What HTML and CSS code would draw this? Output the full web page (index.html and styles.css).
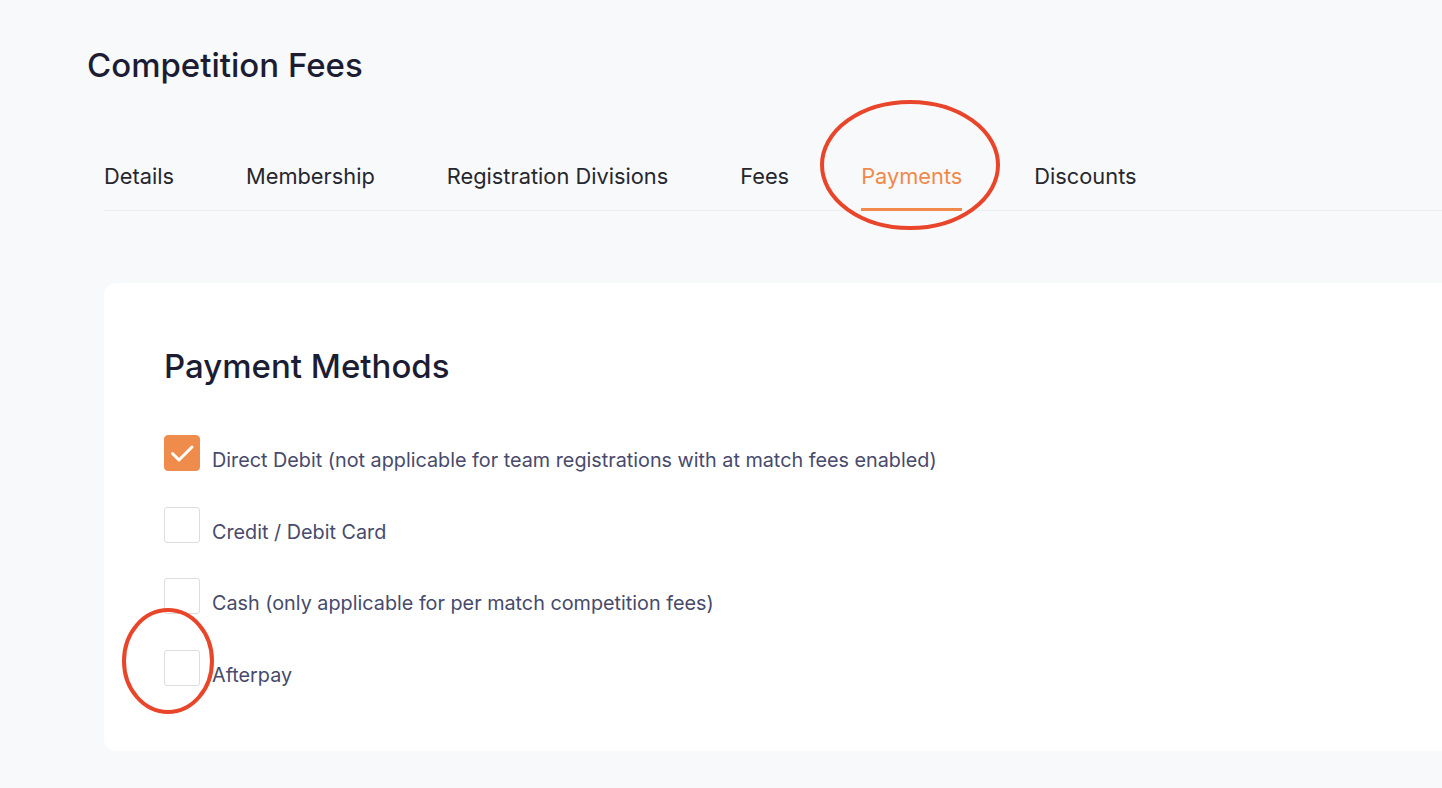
FILE: index.html
```html
<!DOCTYPE html>
<html lang="en">
<head>
<meta charset="utf-8">
<title>Competition Fees</title>
<link rel="stylesheet" href="styles.css">
</head>
<body>
<div class="page">
  <h1 class="title">Competition Fees</h1>
  <nav class="tabs">
    <span class="tab">Details</span>
    <span class="tab">Membership</span>
    <span class="tab">Registration Divisions</span>
    <span class="tab">Fees</span>
    <span class="tab active">Payments</span>
    <span class="tab">Discounts</span>
  </nav>
  <section class="card">
    <h2 class="card-title">Payment Methods</h2>
    <ul class="options">
      <li class="option">
        <span class="box checked">
          <svg viewBox="0 0 36 36" width="36" height="36"><path d="M8.5 18.5l6.5 6.5 13-13" fill="none" stroke="#fff" stroke-width="3" stroke-linecap="round" stroke-linejoin="round"/></svg>
        </span>
        <span class="label">Direct Debit (not applicable for team registrations with at match fees enabled)</span>
      </li>
      <li class="option">
        <span class="box"></span>
        <span class="label">Credit / Debit Card</span>
      </li>
      <li class="option">
        <span class="box"></span>
        <span class="label">Cash (only applicable for per match competition fees)</span>
      </li>
      <li class="option">
        <span class="box"></span>
        <span class="label">Afterpay</span>
      </li>
    </ul>
  </section>
  <svg class="annotations" width="1442" height="788" viewBox="0 0 1442 788">
    <ellipse cx="910" cy="165" rx="88" ry="63" fill="none" stroke="#e8452a" stroke-width="4"/>
    <ellipse cx="168" cy="661" rx="44" ry="51" fill="none" stroke="#e8452a" stroke-width="4"/>
  </svg>
</div>
</body>
</html>
```
FILE: styles.css
```css
html, body {
  margin: 0;
  padding: 0;
  background: #f8f9fb;
  font-family: Inter, "Noto Sans", sans-serif;
  overflow: hidden;
}
.page {
  position: relative;
  width: 1442px;
  height: 788px;
  padding-top: 1px;
  box-sizing: border-box;
}
.title {
  margin: 44px 0 0 87px;
  font-size: 33px;
  line-height: 40px;
  font-weight: 500;
  color: #1c1d33;
}
.tabs {
  display: flex;
  gap: 72px;
  margin: 79px 0 0 104px;
  border-bottom: 1px solid #eceef1;
}
.tab {
  font-size: 21.8px;
  line-height: 24px;
  padding-bottom: 20px;
  margin-bottom: -1px;
  color: #26272e;
  border-bottom: 3px solid transparent;
}
.tab.active {
  color: #f0894a;
  border-bottom-color: #f0894a;
}
.card {
  margin: 72px 0 0 104px;
  background: #fff;
  border-radius: 12px 0 0 12px;
  padding: 63px 60px 54px 60px;
  height: 468px;
  box-sizing: border-box;
}
.card-title {
  margin: 0 0 49px 0;
  font-size: 33px;
  line-height: 40px;
  font-weight: 500;
  color: #1c1d33;
}
.options {
  list-style: none;
  margin: 0;
  padding: 0;
  display: flex;
  flex-direction: column;
  gap: 34.5px;
}
.option {
  display: flex;
  align-items: flex-start;
  gap: 12px;
}
.box {
  width: 36px;
  height: 36px;
  box-sizing: border-box;
  border: 1px solid #dcdde0;
  border-radius: 3px;
  background: #fff;
  flex: none;
}
.box.checked {
  background: #f08c4b;
  border-color: #f08c4b;
  border-radius: 4px;
}
.box svg {
  display: block;
  margin: -1px;
}
.label {
  font-size: 19.8px;
  line-height: 24px;
  padding-top: 13px;
  color: #474a6b;
}
.annotations {
  position: absolute;
  left: 0;
  top: 0;
  pointer-events: none;
}
```
